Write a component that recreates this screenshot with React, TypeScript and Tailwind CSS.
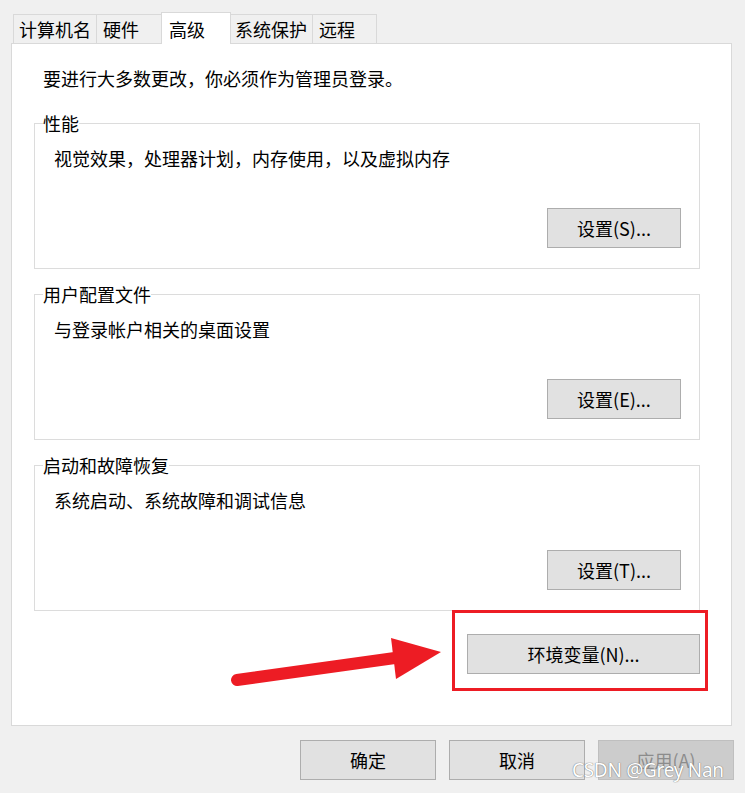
import React from "react";

const FONT = { fontFamily: '"Noto Sans CJK SC", "Noto Sans", sans-serif' };

const tabs = [
  { label: "计算机名", w: "w-[84px]", pl: "pl-[5px]" },
  { label: "硬件", w: "w-[66px]", pl: "pl-[6px]" },
  { label: "高级", w: "w-[70px]", pl: "pl-[7px]", active: true },
  { label: "系统保护", w: "w-[83px]", pl: "pl-[4px]" },
  { label: "远程", w: "w-[65px]", pl: "pl-[6px]" },
];

const groups = [
  { title: "性能", desc: "视觉效果，处理器计划，内存使用，以及虚拟内存", btn: "设置(S)..." },
  { title: "用户配置文件", desc: "与登录帐户相关的桌面设置", btn: "设置(E)..." },
  { title: "启动和故障恢复", desc: "系统启动、系统故障和调试信息", btn: "设置(T)..." },
];

function WinButton({ children, className = "" }: { children: React.ReactNode; className?: string }) {
  return (
    <button
      className={`flex h-[40px] items-center justify-center border border-[#adadad] bg-[#e1e1e1] text-[18px] leading-[24px] text-black ${className}`}
    >
      {children}
    </button>
  );
}

export default function App() {
  return (
    <div
      className="relative h-[793px] w-[745px] overflow-hidden bg-[#f0f0f0] text-black"
      style={FONT}
    >
      {/* tab strip */}
      <div className="ml-[13px] flex h-[43px] items-end pt-[12px]">
        {tabs.map((t, i) => (
          <div
            key={t.label}
            className={`border border-b-0 border-[#d9d9d9] text-[18px] leading-[24px] ${t.w} ${t.pl} ${
              i > 0 ? "-ml-px" : ""
            } ${t.active ? "relative z-10 -mb-px h-[32px] bg-white pt-[4px]" : "h-[29px] bg-[#f0f0f0] pt-[2px]"}`}
          >
            {t.label}
          </div>
        ))}
      </div>

      {/* tab page */}
      <div className="ml-[11px] flex h-[683px] w-[721px] flex-col border border-[#d9d9d9] bg-white px-[22px] pt-[22px]">
        <p className="pl-[9px] text-[18px] leading-[24px]">要进行大多数更改，你必须作为管理员登录。</p>

        <div className="mt-[33px] flex flex-col gap-[25px]">
          {groups.map((g) => (
            <div
              key={g.title}
              className="relative flex h-[146px] w-[666px] flex-col border border-[#dcdcdc] pl-[19px] pr-[18px] pt-[22px] pb-[20px]"
            >
              <span className="absolute left-[8px] top-[-13px] bg-white text-[18px] leading-[24px]">
                {g.title}
              </span>
              <p className="text-[18px] leading-[24px]">{g.desc}</p>
              <WinButton className="mt-auto w-[134px] self-end">{g.btn}</WinButton>
            </div>
          ))}
        </div>

        <div className="mt-[23px] flex w-[666px] justify-end">
          <WinButton className="w-[233px]">环境变量(N)...</WinButton>
        </div>
      </div>

      {/* dialog buttons */}
      <div className="mt-[14px] flex justify-end gap-[13px] pr-[11px]">
        <WinButton className="w-[136px]">确定</WinButton>
        <WinButton className="w-[136px]">取消</WinButton>
        <button className="flex h-[40px] w-[136px] items-center justify-center border border-[#bfbfbf] bg-[#cccccc] text-[18px] leading-[24px] text-[#8c8c8c]">
          应用(A)
        </button>
      </div>

      {/* annotation: red frame + arrow */}
      <div className="pointer-events-none absolute left-[452px] top-[610px] h-[81px] w-[256px] border-[3px] border-[#ed1c24]" />
      <svg
        className="pointer-events-none absolute left-0 top-0"
        width="745"
        height="793"
        viewBox="0 0 745 793"
      >
        <line x1="237" y1="680" x2="402" y2="657" stroke="#ed1c24" strokeWidth="12" strokeLinecap="round" />
        <polygon points="391,638 441,652 396,679" fill="#ed1c24" />
      </svg>

      {/* watermark */}
      <span
        className="pointer-events-none absolute left-[572px] top-[757px] text-[19px] leading-[26px] tracking-[-0.3px] text-white [text-shadow:0_0_1px_#7a7a7a,0_0_1px_#7a7a7a]"
        style={{ fontFamily: '"Noto Sans", "Liberation Sans", sans-serif' }}
      >
        CSDN @Grey Nan
      </span>
    </div>
  );
}
